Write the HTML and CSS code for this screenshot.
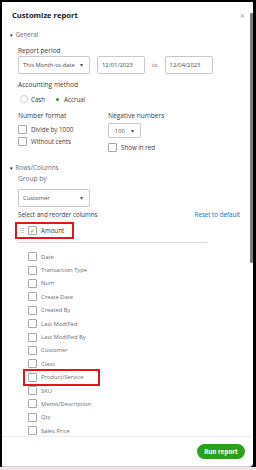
FILE: index.html
```html
<!DOCTYPE html>
<html>
<head>
    <title>Customize report</title>
    <link rel="stylesheet" href="styles.css">
</head>
<body>
    <div class="frame">
        <div class="panel">
            <div class="scroll-thumb"></div>
            <div class="content">
                <div class="title-row">
                    <span class="title">Customize report</span>
                    <span class="close">&times;</span>
                </div>

                <div class="section-head"><span class="caret">&#9660;</span>General</div>
                <div class="section">
                    <div class="label first">Report period</div>
                    <div class="period-row">
                        <div class="select wide">This Month-to-date <span class="arrow">&#9662;</span></div>
                        <div class="input">12/01/2023</div>
                        <span class="to">to</span>
                        <div class="input">12/04/2023</div>
                    </div>

                    <div class="label spaced">Accounting method</div>
                    <div class="radio-row">
                        <span class="radio"></span><span class="opt">Cash</span>
                        <span class="radio on"></span><span class="opt">Accrual</span>
                    </div>

                    <div class="format-grid">
                        <div class="format-col">
                            <div class="label">Number format</div>
                            <div class="check-row"><span class="box"></span>Divide by 1000</div>
                            <div class="check-row"><span class="box"></span>Without cents</div>
                        </div>
                        <div class="format-col">
                            <div class="label">Negative numbers</div>
                            <div class="select small">-100 <span class="arrow">&#9662;</span></div>
                            <div class="check-row"><span class="box"></span>Show in red</div>
                        </div>
                    </div>
                </div>

                <div class="section-head"><span class="caret">&#9660;</span>Rows/Columns</div>
                <div class="section">
                    <div class="label light">Group by</div>
                    <div class="select wide">Customer <span class="arrow">&#9662;</span></div>
                    <div class="cols-head">
                        <span>Select and reorder columns</span>
                        <span class="link">Reset to default</span>
                    </div>
                    <div class="amount-row highlight">
                        <span class="grip"></span>
                        <span class="box checked">&#10003;</span>
                        <span>Amount</span>
                    </div>
                    <div class="divider"></div>
                    <ul class="col-list">
                        <li><span class="box"></span>Date</li>
                        <li><span class="box"></span>Transaction Type</li>
                        <li><span class="box"></span>Num</li>
                        <li><span class="box"></span>Create Date</li>
                        <li><span class="box"></span>Created By</li>
                        <li><span class="box"></span>Last Modified</li>
                        <li><span class="box"></span>Last Modified By</li>
                        <li><span class="box"></span>Customer</li>
                        <li><span class="box"></span>Class</li>
                        <li class="highlight"><span class="box"></span>Product/Service</li>
                        <li><span class="box"></span>SKU</li>
                        <li><span class="box"></span>Memo/Description</li>
                        <li><span class="box"></span>Qty</li>
                        <li><span class="box"></span>Sales Price</li>
                    </ul>
                </div>
            </div>
            <div class="footer">
                <button class="run">Run report</button>
            </div>
        </div>
    </div>
</body>
</html>
```

FILE: styles.css
```css
body {
    margin: 0;
    font-family: 'Open Sans', 'Liberation Sans', sans-serif;
    background: #f3e4e4;
}
.frame {
    width: 256px;
    height: 467px;
    box-sizing: border-box;
    background: #000;
    padding: 2px 3px 0 2px;
}
.panel {
    position: relative;
    height: 465px;
    box-sizing: border-box;
    background: #fff;
    border-radius: 0 0 4px 0;
    display: flex;
    flex-direction: column;
    border-bottom: 1px solid #cfcfcf;
}
.scroll-thumb {
    position: absolute;
    right: 0;
    top: 11px;
    width: 3px;
    height: 250px;
    background: #7d7d7d;
    border-radius: 1px;
}
.content {
    flex: 1;
    overflow: hidden;
    padding: 0 10px 0 7px;
    color: #393a3d;
    border-bottom: 1px solid #eceef1;
}
.title-row {
    display: flex;
    justify-content: space-between;
    align-items: center;
    height: 26px;
    padding-left: 3px;
}
.title {
    font-size: 7.6px;
    font-weight: bold;
    color: #222;
}
.close {
    font-size: 9px;
    color: #b0b0b0;
    margin-right: -2px;
}
.section-head {
    font-size: 6.2px;
    color: #6b6c72;
    display: flex;
    align-items: center;
    height: 13px;
}
.caret {
    font-size: 4.5px;
    color: #222;
    margin-right: 2px;
}
.section {
    padding-left: 9px;
}
.label {
    font-size: 6.6px;
    color: #393a3d;
    margin-top: 3px;
    margin-bottom: 3px;
}
.label.first {
    margin-top: 5px;
    margin-bottom: 1px;
}
.label.spaced {
    margin-top: 6px;
}
.label.light {
    color: #6b6c72;
    margin-top: 0;
    margin-bottom: 6px;
}
.period-row {
    display: flex;
    align-items: center;
}
.select, .input {
    box-sizing: border-box;
    height: 18px;
    border: 1px solid #c8c9cc;
    border-radius: 2px;
    font-size: 5.8px;
    color: #4a4b50;
    display: flex;
    align-items: center;
    padding: 0 4px;
}
.select {
    justify-content: space-between;
}
.select.wide {
    width: 72px;
}
.select.small {
    width: 33px;
    height: 15px;
    margin-bottom: 3px;
}
.arrow {
    font-size: 6px;
    color: #555;
    margin-right: 2px;
}
.input {
    width: 48px;
    margin-left: 7px;
}
.to {
    font-size: 5.8px;
    color: #6b6c72;
    margin-left: 7px;
}
.radio-row {
    display: flex;
    align-items: center;
    height: 14px;
    margin-top: 3px;
    font-size: 6.2px;
}
.radio {
    width: 6px;
    height: 6px;
    border: 1px solid #d0d0d0;
    border-radius: 50%;
    margin-right: 3px;
    margin-left: 2px;
    position: relative;
}
.radio.on {
    border-color: #fff;
}
.radio.on::after {
    content: '';
    position: absolute;
    left: 1.5px;
    top: 1.5px;
    width: 3px;
    height: 3px;
    border-radius: 50%;
    background: #2ca01c;
}
.opt {
    margin-right: 6px;
}
.format-grid {
    display: grid;
    grid-template-columns: 90px 90px;
    margin-top: 2px;
    margin-bottom: 8px;
}
.check-row {
    display: flex;
    align-items: center;
    font-size: 6.2px;
    height: 12px;
    color: #393a3d;
}
.box {
    box-sizing: border-box;
    width: 9px;
    height: 9px;
    border: 1px solid #a8a9ad;
    border-radius: 1px;
    margin-right: 4px;
    flex-shrink: 0;
    display: flex;
    align-items: center;
    justify-content: center;
}
.box.checked {
    color: #2ca01c;
    font-size: 6px;
    border-color: #a8a9ad;
}
.cols-head {
    display: flex;
    justify-content: space-between;
    font-size: 6.2px;
    margin-top: 3px;
    color: #393a3d;
}
.link {
    color: #0077c5;
    margin-right: 3px;
}
.amount-row {
    display: flex;
    align-items: center;
    font-size: 6.2px;
    width: 55px;
    height: 13px;
    margin-top: 5px;
    margin-left: -1px;
    box-sizing: border-box;
    padding-left: 3px;
}
.grip {
    width: 4px;
    height: 5px;
    margin-right: 4px;
    background: repeating-linear-gradient(#d0d0d0 0 1px, transparent 1px 2px);
}
.highlight {
    outline: 2px solid #e8141c;
}
.divider {
    height: 1px;
    background: #d4d7dc;
    width: 189px;
    margin-top: 5px;
    margin-bottom: 7px;
}
.col-list {
    list-style: none;
    margin: 0;
    padding: 0 0 0 10px;
}
.col-list li {
    display: flex;
    align-items: center;
    height: 13.4px;
    font-size: 5.8px;
    color: #6b6c72;
}
.col-list li.highlight {
    width: 70px;
    margin-left: -3px;
    padding-left: 3px;
}
.footer {
    height: 29px;
    display: flex;
    justify-content: flex-end;
    align-items: center;
    padding-right: 8px;
}
.run {
    font-family: inherit;
    font-size: 6.2px;
    font-weight: bold;
    color: #fff;
    background: #2ca01c;
    border: none;
    border-radius: 8px;
    width: 48px;
    height: 15px;
    padding: 0;
}
```
